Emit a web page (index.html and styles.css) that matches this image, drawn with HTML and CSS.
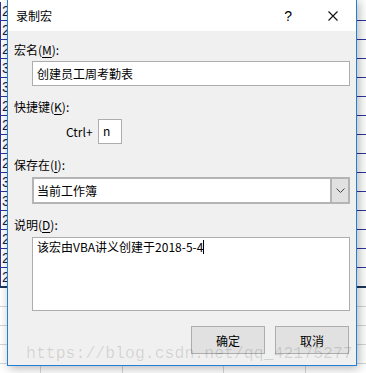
FILE: index.html
```html
<!DOCTYPE html>
<html lang="zh-CN">
<head>
    <meta charset="UTF-8">
    <title>录制宏</title>
    <link rel="stylesheet" href="styles.css">
</head>
<body>
    <div class="sheet">
        <div class="row"><span class="num">26</span></div>
        <div class="row"><span class="num">23</span></div>
        <div class="row"><span class="num">25</span></div>
        <div class="row"><span class="num">34</span></div>
        <div class="row"><span class="num">31</span></div>
        <div class="row"><span class="num">28</span></div>
        <div class="row"><span class="num">27</span></div>
        <div class="row"><span class="num">23</span></div>
        <div class="row"><span class="num">22</span></div>
        <div class="row"><span class="num">32</span></div>
        <div class="row"><span class="num">31</span></div>
        <div class="row"><span class="num">25</span></div>
        <div class="row"><span class="num">26</span></div>
        <div class="row"><span class="num">25</span></div>
        <div class="row last"><span class="num">23</span></div>
        <div class="row plain"><span></span><span></span><span></span><span></span><span></span></div>
        <div class="row plain"><span></span><span></span><span></span><span></span><span></span></div>
        <div class="row plain"><span></span><span></span><span></span><span></span><span></span></div>
        <div class="row plain"><span></span><span></span><span></span><span></span><span></span></div>
        <div class="row plain"><span></span><span></span><span></span><span></span><span></span></div>
    </div>

    <div class="dialog">
        <div class="titlebar">
            <span class="title">录制宏</span>
            <span class="help">?</span>
            <svg class="close" width="10" height="10" viewBox="0 0 10 10">
                <path d="M0.5 0.5 L9.5 9.5 M9.5 0.5 L0.5 9.5" stroke="#111" stroke-width="1.1" fill="none"/>
            </svg>
        </div>
        <div class="body">
            <div class="label">宏名(<u>M</u>):</div>
            <div class="field text">创建员工周考勤表</div>

            <div class="label gap">快捷键(<u>K</u>):</div>
            <div class="shortcut">
                <span class="ctrl">Ctrl+</span>
                <div class="keybox">n</div>
            </div>

            <div class="label gap">保存在(<u>I</u>):</div>
            <div class="field select">
                <span class="value">当前工作簿</span>
                <span class="drop">
                    <svg width="9" height="5" viewBox="0 0 9 5">
                        <path d="M0.5 0.5 L4.5 4.5 L8.5 0.5" stroke="#444" stroke-width="1" fill="none"/>
                    </svg>
                </span>
            </div>

            <div class="label gap">说明(<u>D</u>):</div>
            <div class="field area">该宏由VBA讲义创建于2018-5-4<span class="caret"></span></div>

            <div class="buttons">
                <button>确定</button>
                <button>取消</button>
            </div>
        </div>
    </div>

    <div class="watermark">https://blog.csdn.net/qq_42175277</div>
</body>
</html>
```

FILE: styles.css
```css
body {
    margin: 0;
    width: 366px;
    height: 373px;
    overflow: hidden;
    background: #fff;
    font-family: "Noto Sans CJK SC", "Noto Sans", sans-serif;
    font-size: 12px;
    color: #000;
}
.sheet {
    padding-top: 2px;
}
.row {
    display: flex;
    height: 19px;
    box-sizing: border-box;
    border-bottom: 1px solid #2f3399;
}
.row.last {
    height: 20px;
    border-bottom: 2px solid #1d3557;
}
.num {
    width: 40px;
    border-left: 1px solid #2f3399;
    padding-left: 1px;
    font-family: "Liberation Sans", sans-serif;
    font-size: 14px;
    line-height: 18px;
    color: #1c1c3c;
}
.row.plain {
    border-bottom: 1px solid #d6d6d6;
}
.row.plain span {
    box-sizing: border-box;
    border-right: 1px solid #d6d6d6;
}
.row.plain span:nth-child(1) { width: 41px; }
.row.plain span:nth-child(2) { width: 82px; }
.row.plain span:nth-child(3) { width: 101px; }
.row.plain span:nth-child(4) { width: 82px; }
.row.plain span:nth-child(5) { width: 60px; border-right: none; }

.dialog {
    position: absolute;
    left: 7px;
    top: -1px;
    width: 350px;
    height: 367px;
    box-sizing: border-box;
    border: 1px solid #1e80d6;
    background: #f0f0f0;
    box-shadow: 2px 2px 10px rgba(0, 0, 0, 0.3);
}
.titlebar {
    display: flex;
    align-items: center;
    height: 31px;
    background: #fff;
    padding-left: 8px;
}
.title {
    flex: 1;
    line-height: 16px;
}
.help {
    font-family: "Liberation Sans", sans-serif;
    font-size: 14px;
    margin-right: 36px;
}
.close {
    margin-right: 18px;
}
.body {
    padding: 11px 6px 0 6px;
}
.label {
    line-height: 16px;
    height: 16px;
}
.label.gap {
    margin-top: 13px;
}
.label u {
    text-underline-offset: 2px;
}
.field {
    margin-left: 18px;
    box-sizing: border-box;
    background: #fff;
    border: 1px solid #adadad;
}
.text {
    margin-top: 3px;
    height: 25px;
    line-height: 23px;
    padding-left: 4px;
}
.shortcut {
    display: flex;
    align-items: center;
    margin-top: 4px;
    padding-left: 52px;
}
.ctrl {
    width: 32px;
}
.keybox {
    width: 24px;
    height: 25px;
    box-sizing: border-box;
    background: #fff;
    border: 1px solid #adadad;
    line-height: 22px;
    padding-left: 4px;
}
.select {
    display: flex;
    margin-top: 4px;
    height: 27px;
    border: 2px solid #b4b4b4;
}
.select .value {
    flex: 1;
    line-height: 23px;
    padding-left: 3px;
}
.drop {
    display: flex;
    align-items: center;
    justify-content: center;
    width: 16px;
    background: #e1e1e1;
    border-left: 2px solid #b4b4b4;
}
.area {
    margin-top: 4px;
    height: 74px;
    line-height: 16px;
    padding: 1px 4px;
}
.caret {
    display: inline-block;
    width: 1px;
    height: 14px;
    background: #000;
    vertical-align: -2px;
}
.buttons {
    display: flex;
    justify-content: flex-end;
    gap: 10px;
    margin-top: 15px;
    margin-right: 1px;
}
button {
    width: 74px;
    height: 28px;
    background: #e1e1e1;
    border: 1px solid #adadad;
    font-family: "Noto Sans CJK SC", sans-serif;
    font-size: 12px;
    color: #000;
    padding: 0;
}
.watermark {
    position: absolute;
    left: 26px;
    top: 345px;
    font-family: "Liberation Mono", monospace;
    font-size: 16.5px;
    line-height: 17px;
    color: rgba(0, 0, 0, 0.13);
    pointer-events: none;
}
```
